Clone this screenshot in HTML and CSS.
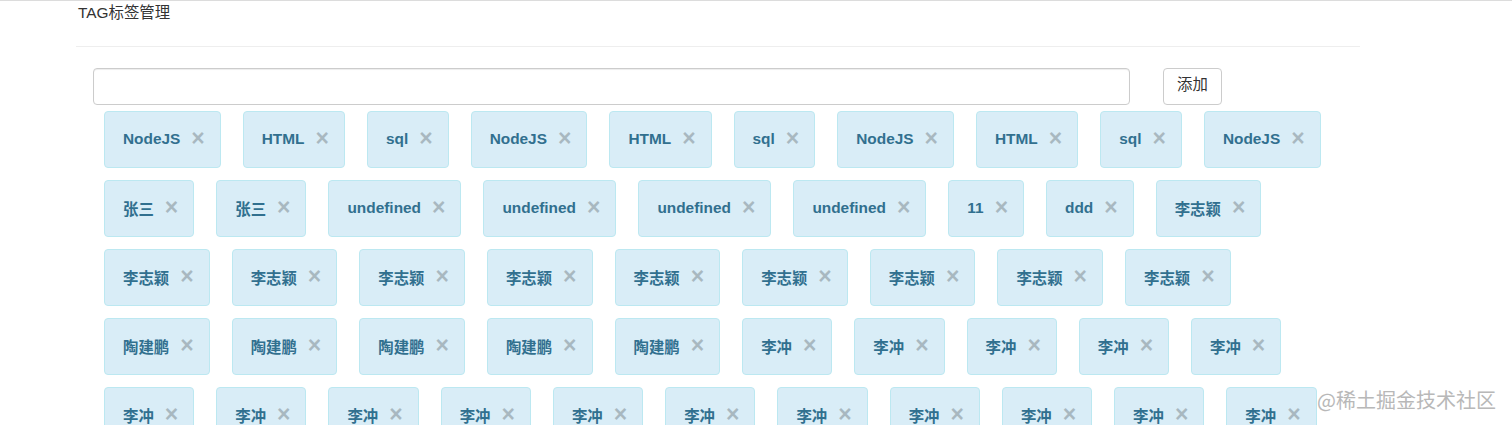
FILE: index.html
```html
<!DOCTYPE html>
<html lang="zh-CN">
<head>
    <meta charset="UTF-8">
    <meta name="viewport" content="width=device-width, initial-scale=1.0">
    <title>TAG标签管理</title>
    <link rel="stylesheet" href="styles.css">
</head>
<body>
    <div class="page">
        <h3 class="page-title">TAG标签管理</h3>
        <div class="divider"></div>

        <div class="add-form">
            <input type="text" class="add-input" id="tagInput">
            <button class="add-btn" id="addBtn">添加</button>
        </div>

        <div class="tag-list" id="tagList">
            <div class="tag"><span>NodeJS</span><span class="tag-close">&times;</span></div>
            <div class="tag"><span>HTML</span><span class="tag-close">&times;</span></div>
            <div class="tag"><span>sql</span><span class="tag-close">&times;</span></div>
            <div class="tag"><span>NodeJS</span><span class="tag-close">&times;</span></div>
            <div class="tag"><span>HTML</span><span class="tag-close">&times;</span></div>
            <div class="tag"><span>sql</span><span class="tag-close">&times;</span></div>
            <div class="tag"><span>NodeJS</span><span class="tag-close">&times;</span></div>
            <div class="tag"><span>HTML</span><span class="tag-close">&times;</span></div>
            <div class="tag"><span>sql</span><span class="tag-close">&times;</span></div>
            <div class="tag"><span>NodeJS</span><span class="tag-close">&times;</span></div>

            <div class="tag"><span>张三</span><span class="tag-close">&times;</span></div>
            <div class="tag"><span>张三</span><span class="tag-close">&times;</span></div>
            <div class="tag"><span>undefined</span><span class="tag-close">&times;</span></div>
            <div class="tag"><span>undefined</span><span class="tag-close">&times;</span></div>
            <div class="tag"><span>undefined</span><span class="tag-close">&times;</span></div>
            <div class="tag"><span>undefined</span><span class="tag-close">&times;</span></div>
            <div class="tag"><span>11</span><span class="tag-close">&times;</span></div>
            <div class="tag"><span>ddd</span><span class="tag-close">&times;</span></div>
            <div class="tag"><span>李志颖</span><span class="tag-close">&times;</span></div>

            <div class="tag"><span>李志颖</span><span class="tag-close">&times;</span></div>
            <div class="tag"><span>李志颖</span><span class="tag-close">&times;</span></div>
            <div class="tag"><span>李志颖</span><span class="tag-close">&times;</span></div>
            <div class="tag"><span>李志颖</span><span class="tag-close">&times;</span></div>
            <div class="tag"><span>李志颖</span><span class="tag-close">&times;</span></div>
            <div class="tag"><span>李志颖</span><span class="tag-close">&times;</span></div>
            <div class="tag"><span>李志颖</span><span class="tag-close">&times;</span></div>
            <div class="tag"><span>李志颖</span><span class="tag-close">&times;</span></div>
            <div class="tag"><span>李志颖</span><span class="tag-close">&times;</span></div>

            <div class="tag"><span>陶建鹏</span><span class="tag-close">&times;</span></div>
            <div class="tag"><span>陶建鹏</span><span class="tag-close">&times;</span></div>
            <div class="tag"><span>陶建鹏</span><span class="tag-close">&times;</span></div>
            <div class="tag"><span>陶建鹏</span><span class="tag-close">&times;</span></div>
            <div class="tag"><span>陶建鹏</span><span class="tag-close">&times;</span></div>
            <div class="tag"><span>李冲</span><span class="tag-close">&times;</span></div>
            <div class="tag"><span>李冲</span><span class="tag-close">&times;</span></div>
            <div class="tag"><span>李冲</span><span class="tag-close">&times;</span></div>
            <div class="tag"><span>李冲</span><span class="tag-close">&times;</span></div>
            <div class="tag"><span>李冲</span><span class="tag-close">&times;</span></div>

            <div class="tag"><span>李冲</span><span class="tag-close">&times;</span></div>
            <div class="tag"><span>李冲</span><span class="tag-close">&times;</span></div>
            <div class="tag"><span>李冲</span><span class="tag-close">&times;</span></div>
            <div class="tag"><span>李冲</span><span class="tag-close">&times;</span></div>
            <div class="tag"><span>李冲</span><span class="tag-close">&times;</span></div>
            <div class="tag"><span>李冲</span><span class="tag-close">&times;</span></div>
            <div class="tag"><span>李冲</span><span class="tag-close">&times;</span></div>
            <div class="tag"><span>李冲</span><span class="tag-close">&times;</span></div>
            <div class="tag"><span>李冲</span><span class="tag-close">&times;</span></div>
            <div class="tag"><span>李冲</span><span class="tag-close">&times;</span></div>
            <div class="tag"><span>李冲</span><span class="tag-close">&times;</span></div>
        </div>
    </div>

    <div class="watermark">@稀土掘金技术社区</div>
</body>
</html>
```

FILE: styles.css
```css
* {
    box-sizing: border-box;
}

body {
    margin: 0;
    font-family: 'Liberation Sans', Arial, 'Noto Sans CJK SC', sans-serif;
    color: #333;
    background: #fff;
    border-top: 1px solid #dcdcdc;
    position: relative;
    min-height: 425px;
    overflow: hidden;
}

.page {
    width: 1284px;
    margin-left: 76px;
}

.page-title {
    margin: 0;
    padding: 2px 0 0 2px;
    font-size: 15.4px;
    font-weight: normal;
    line-height: 20px;
    color: #333;
}

.divider {
    margin-top: 23px;
    border-top: 1px solid #eee;
}

.add-form {
    display: flex;
    align-items: center;
    margin-top: 21px;
    padding-left: 17px;
}

.add-input {
    width: 1037px;
    height: 37px;
    border: 1px solid #ccc;
    border-radius: 4px;
    box-shadow: inset 0 1px 1px rgba(0,0,0,0.075);
    outline: none;
}

.add-btn {
    margin-left: 33px;
    width: 59px;
    height: 37px;
    padding: 0 0 3px;
    background: #fff;
    border: 1px solid #ccc;
    border-radius: 4px;
    color: #333;
    font-family: 'Liberation Sans', Arial, 'Noto Sans CJK SC', sans-serif;
    font-size: 15.4px;
    line-height: 1;
    cursor: pointer;
}

.tag-list {
    display: flex;
    flex-wrap: wrap;
    gap: 12px 22px;
    width: 1274px;
    margin-top: 6px;
    padding-left: 28px;
}

.tag {
    display: flex;
    align-items: center;
    height: 57px;
    padding: 0 15px 2px 18px;
    background: #d9edf7;
    border: 1px solid #bce8f1;
    border-radius: 4px;
    color: #31708f;
    font-size: 15.4px;
    font-weight: bold;
}

.tag-close {
    margin-left: 11px;
    font-size: 23px;
    font-weight: bold;
    line-height: 1;
    color: #000;
    opacity: 0.22;
    cursor: pointer;
}

.watermark {
    position: absolute;
    top: 385px;
    right: 16px;
    font-family: 'Noto Sans CJK SC', sans-serif;
    font-size: 20px;
    line-height: 28px;
    color: #b8b8b8;
}
```
